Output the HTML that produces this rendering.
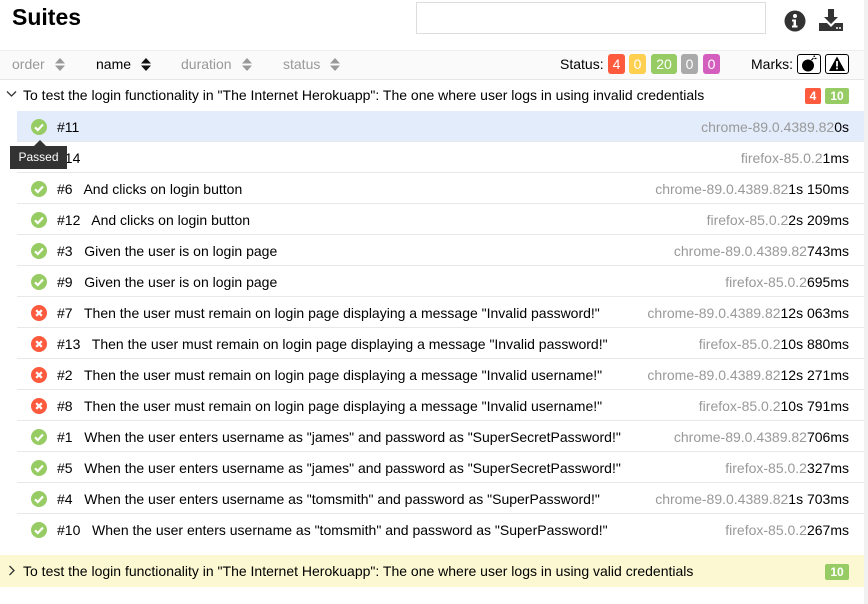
<!DOCTYPE html>
<html><head><meta charset="utf-8"><style>
*{box-sizing:border-box;margin:0;padding:0}
body{width:868px;height:604px;overflow:hidden;background:#fff;font-family:"Liberation Sans",Arial,sans-serif;font-size:14px;color:#000;position:relative}
.abs{position:absolute}
h1{position:absolute;left:12px;top:4px;font-size:23px;font-weight:bold}
.search{left:416px;top:2px;width:350px;height:32px;border:1px solid #ddd}
.bar{left:0;top:50px;width:864px;height:30px;background:#fafafa;border-top:1px solid #eee;border-bottom:1px solid #e6e6e6}
.sort{top:56px;font-size:14px;color:#999}
.arr{display:inline-block;width:10px;height:13px;vertical-align:-2px;margin-left:10px}
.b{position:absolute;height:20px;top:54px;border-radius:3px;color:#fff;font-size:14px;text-align:center;line-height:20px}
.sb{position:absolute;height:16px;top:88px;border-radius:2px;color:#fff;font-size:12px;font-weight:bold;text-align:center;line-height:16px}
.mk{position:absolute;top:54px;width:24px;height:20px;border:1px solid #000;border-radius:3px;background:#fff}
.row{position:absolute;left:17px;width:847px;height:31px;border-bottom:1px solid #e8e8e8}
.row .ic{position:absolute;left:14px;top:8px;width:16px;height:16px;border-radius:50%}
.row .t{position:absolute;left:40px;top:8px;white-space:pre}
.row .r{position:absolute;right:15px;top:8px;white-space:pre}
.g{color:#999}
.scroll{left:864px;top:0;width:4px;height:604px;background:#f1f1f1}
</style></head><body>
<h1>Suites</h1>
<div class="abs search"></div>
<svg class="abs" style="left:784px;top:10px" width="22" height="22" viewBox="0 0 22 22"><circle cx="11" cy="11" r="10.5" fill="#333"/><circle cx="11" cy="6" r="2" fill="#fff"/><path d="M8 9.5h4v6h1.5v2h-5.5v-2h1.5v-4h-1.5z" fill="#fff"/></svg>
<svg class="abs" style="left:819px;top:9px" width="24" height="22" viewBox="0 0 24 22"><path d="M9 0h6v8h4l-7 7-7-7h4z" fill="#333"/><path d="M0 14h8l4 4 4-4h8v8H0z" fill="#333"/><circle cx="18" cy="19" r="1" fill="#fff"/><circle cx="21" cy="19" r="1" fill="#fff"/></svg>
<div class="abs bar"></div>
<div class="abs sort" style="left:12px">order<svg class="arr" viewBox="0 0 10 13"><path d="M0 5.5L5 0L10 5.5zM0 7.5L5 13L10 7.5z" fill="#999"/></svg></div>
<div class="abs sort" style="left:96px;color:#000">name<svg class="arr" viewBox="0 0 10 13"><path d="M0 5.5L5 0L10 5.5zM0 7.5L5 13L10 7.5z" fill="#111"/></svg></div>
<div class="abs sort" style="left:181px">duration<svg class="arr" viewBox="0 0 10 13"><path d="M0 5.5L5 0L10 5.5zM0 7.5L5 13L10 7.5z" fill="#999"/></svg></div>
<div class="abs sort" style="left:283px">status<svg class="arr" viewBox="0 0 10 13"><path d="M0 5.5L5 0L10 5.5zM0 7.5L5 13L10 7.5z" fill="#999"/></svg></div>
<div class="abs" style="left:560px;top:56px">Status:</div>
<div class="b" style="left:608px;width:17px;background:#fd5a3e">4</div>
<div class="b" style="left:629px;width:17px;background:#ffd050">0</div>
<div class="b" style="left:651px;width:26px;background:#97cc64">20</div>
<div class="b" style="left:681px;width:17px;background:#aaa">0</div>
<div class="b" style="left:703px;width:17px;background:#d35ebe">0</div>
<div class="abs" style="left:751px;top:56px">Marks:</div>
<div class="mk" style="left:797px"><svg width="22" height="18" viewBox="0 0 22 18"><circle cx="10" cy="10.5" r="6" fill="#000"/><path d="M13.5 5l2-2M15.5 1.5l1.5-0.5M16.5 3.5l2 0" stroke="#000" stroke-width="1.2"/></svg></div>
<div class="mk" style="left:825px"><svg width="22" height="18" viewBox="0 0 22 18"><path d="M11 1.5L19 16H3z" fill="#000"/><rect x="10.1" y="6" width="1.8" height="5.5" fill="#fff"/><rect x="10.1" y="12.5" width="1.8" height="1.8" fill="#fff"/></svg></div>
<svg class="abs" style="left:6px;top:90px" width="11" height="8" viewBox="0 0 11 8"><path d="M1 1.5l4.5 4.5 4.5-4.5" fill="none" stroke="#333" stroke-width="1.3"/></svg>
<div class="abs" style="left:23px;top:87px">To test the login functionality in "The Internet Herokuapp": The one where user logs in using invalid credentials</div>
<div class="sb" style="left:805px;width:16px;background:#fd5a3e">4</div>
<div class="sb" style="left:825px;width:24px;background:#97cc64">10</div>

<div class="row" style="top:111px;background:#e3ecfb"><div class="ic" style="background:#97cc64"></div><span class="t">#11</span><span class="r"><span class="g">chrome-89.0.4389.82</span>0s</span></div>
<div class="row" style="top:142px"><div class="ic" style="background:#97cc64"></div><span class="t">#14</span><span class="r"><span class="g">firefox-85.0.2</span>1ms</span></div>
<div class="row" style="top:173px"><div class="ic" style="background:#97cc64"></div><span class="t">#6   And clicks on login button</span><span class="r"><span class="g">chrome-89.0.4389.82</span>1s 150ms</span></div>
<div class="row" style="top:204px"><div class="ic" style="background:#97cc64"></div><span class="t">#12   And clicks on login button</span><span class="r"><span class="g">firefox-85.0.2</span>2s 209ms</span></div>
<div class="row" style="top:235px"><div class="ic" style="background:#97cc64"></div><span class="t">#3   Given the user is on login page</span><span class="r"><span class="g">chrome-89.0.4389.82</span>743ms</span></div>
<div class="row" style="top:266px"><div class="ic" style="background:#97cc64"></div><span class="t">#9   Given the user is on login page</span><span class="r"><span class="g">firefox-85.0.2</span>695ms</span></div>
<div class="row" style="top:297px"><div class="ic" style="background:#fd5a3e"></div><span class="t">#7   Then the user must remain on login page displaying a message "Invalid password!"</span><span class="r"><span class="g">chrome-89.0.4389.82</span>12s 063ms</span></div>
<div class="row" style="top:328px"><div class="ic" style="background:#fd5a3e"></div><span class="t">#13   Then the user must remain on login page displaying a message "Invalid password!"</span><span class="r"><span class="g">firefox-85.0.2</span>10s 880ms</span></div>
<div class="row" style="top:359px"><div class="ic" style="background:#fd5a3e"></div><span class="t">#2   Then the user must remain on login page displaying a message "Invalid username!"</span><span class="r"><span class="g">chrome-89.0.4389.82</span>12s 271ms</span></div>
<div class="row" style="top:390px"><div class="ic" style="background:#fd5a3e"></div><span class="t">#8   Then the user must remain on login page displaying a message "Invalid username!"</span><span class="r"><span class="g">firefox-85.0.2</span>10s 791ms</span></div>
<div class="row" style="top:421px"><div class="ic" style="background:#97cc64"></div><span class="t">#1   When the user enters username as "james" and password as "SuperSecretPassword!"</span><span class="r"><span class="g">chrome-89.0.4389.82</span>706ms</span></div>
<div class="row" style="top:452px"><div class="ic" style="background:#97cc64"></div><span class="t">#5   When the user enters username as "james" and password as "SuperSecretPassword!"</span><span class="r"><span class="g">firefox-85.0.2</span>327ms</span></div>
<div class="row" style="top:483px"><div class="ic" style="background:#97cc64"></div><span class="t">#4   When the user enters username as "tomsmith" and password as "SuperPassword!"</span><span class="r"><span class="g">chrome-89.0.4389.82</span>1s 703ms</span></div>
<div class="row" style="top:514px;border-bottom:none"><div class="ic" style="background:#97cc64"></div><span class="t">#10   When the user enters username as "tomsmith" and password as "SuperPassword!"</span><span class="r"><span class="g">firefox-85.0.2</span>267ms</span></div>

<div class="abs" style="left:0;top:555px;width:864px;height:32px;background:#fcf8d2"></div>
<svg class="abs" style="left:8px;top:565px" width="8" height="11" viewBox="0 0 8 11"><path d="M1.5 1l4.5 4.5-4.5 4.5" fill="none" stroke="#333" stroke-width="1.3"/></svg>
<div class="abs" style="left:23px;top:563px">To test the login functionality in "The Internet Herokuapp": The one where user logs in using valid credentials</div>
<div class="sb" style="left:825px;top:564px;width:24px;background:#97cc64">10</div>

<div class="abs" style="left:10px;top:146px;width:57px;height:23px;background:#333;color:#fff;font-size:12px;line-height:23px;text-align:center">Passed</div>
<div class="abs" style="left:34px;top:140px;width:0;height:0;border-left:6px solid transparent;border-right:6px solid transparent;border-bottom:6px solid #333"></div>
<div class="abs scroll"></div>
<script>
document.querySelectorAll('.row .ic').forEach(function(e){
 var pass=e.style.background.indexOf('151')>=0||e.style.background.indexOf('97cc64')>=0;
 e.innerHTML=pass?'<svg width="16" height="16" viewBox="0 0 16 16"><path d="M4 8.3l2.8 2.7L12 5.5" fill="none" stroke="#fff" stroke-width="2.2"/></svg>':'<svg width="16" height="16" viewBox="0 0 16 16"><path d="M5.2 5.2l5.6 5.6M10.8 5.2l-5.6 5.6" stroke="#fff" stroke-width="2.2"/></svg>';
});
</script>
</body></html>
